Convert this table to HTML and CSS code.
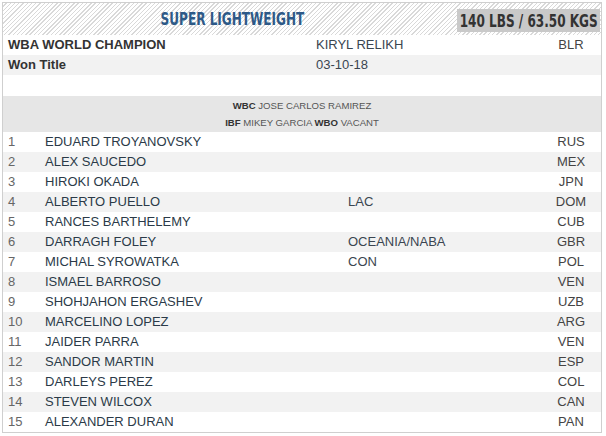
FILE: index.html
```html
<!DOCTYPE html>
<html>
<head>
<meta charset="utf-8">
<link rel="stylesheet" href="styles.css">
</head>
<body>
<div class="panel">
  <div class="head">
    <h2 class="title"><span class="narrow">SUPER LIGHTWEIGHT</span></h2>
    <span class="weight"><span class="narrow">140 LBS / 63.50 KGS</span></span>
  </div>
  <div class="crow">
    <span class="c-label">WBA WORLD CHAMPION</span>
    <span class="c-val">KIRYL RELIKH</span>
    <span class="c-cty">BLR</span>
  </div>
  <div class="crow alt">
    <span class="c-label">Won Title</span>
    <span class="c-val">03-10-18</span>
    <span class="c-cty"></span>
  </div>
  <div class="crow blank"></div>
  <div class="others">
    <div class="oline"><b>WBC</b> JOSE CARLOS RAMIREZ</div>
    <div class="oline"><b>IBF</b> MIKEY GARCIA <b>WBO</b> VACANT</div>
  </div>
  <div class="ranks">
    <div class="rrow"><span class="rk">1</span><span class="nm">EDUARD TROYANOVSKY</span><span class="rg"></span><span class="ct">RUS</span></div>
    <div class="rrow"><span class="rk">2</span><span class="nm">ALEX SAUCEDO</span><span class="rg"></span><span class="ct">MEX</span></div>
    <div class="rrow"><span class="rk">3</span><span class="nm">HIROKI OKADA</span><span class="rg"></span><span class="ct">JPN</span></div>
    <div class="rrow"><span class="rk">4</span><span class="nm">ALBERTO PUELLO</span><span class="rg">LAC</span><span class="ct">DOM</span></div>
    <div class="rrow"><span class="rk">5</span><span class="nm">RANCES BARTHELEMY</span><span class="rg"></span><span class="ct">CUB</span></div>
    <div class="rrow"><span class="rk">6</span><span class="nm">DARRAGH FOLEY</span><span class="rg">OCEANIA/NABA</span><span class="ct">GBR</span></div>
    <div class="rrow"><span class="rk">7</span><span class="nm">MICHAL SYROWATKA</span><span class="rg">CON</span><span class="ct">POL</span></div>
    <div class="rrow"><span class="rk">8</span><span class="nm">ISMAEL BARROSO</span><span class="rg"></span><span class="ct">VEN</span></div>
    <div class="rrow"><span class="rk">9</span><span class="nm">SHOHJAHON ERGASHEV</span><span class="rg"></span><span class="ct">UZB</span></div>
    <div class="rrow"><span class="rk">10</span><span class="nm">MARCELINO LOPEZ</span><span class="rg"></span><span class="ct">ARG</span></div>
    <div class="rrow"><span class="rk">11</span><span class="nm">JAIDER PARRA</span><span class="rg"></span><span class="ct">VEN</span></div>
    <div class="rrow"><span class="rk">12</span><span class="nm">SANDOR MARTIN</span><span class="rg"></span><span class="ct">ESP</span></div>
    <div class="rrow"><span class="rk">13</span><span class="nm">DARLEYS PEREZ</span><span class="rg"></span><span class="ct">COL</span></div>
    <div class="rrow"><span class="rk">14</span><span class="nm">STEVEN WILCOX</span><span class="rg"></span><span class="ct">CAN</span></div>
    <div class="rrow"><span class="rk">15</span><span class="nm">ALEXANDER DURAN</span><span class="rg"></span><span class="ct">PAN</span></div>
  </div>
</div>
</body>
</html>
```
FILE: styles.css
```css
html, body {
  margin: 0;
  padding: 0;
  background: #fff;
}
body {
  font-family: "Liberation Sans", Arial, sans-serif;
  font-size: 13px;
  color: #333;
}
.panel {
  margin: 2px 4px 0 2px;
  border: 1px solid #cfcfcf;
  width: 600px;
  box-sizing: border-box;
}
.head {
  display: flex;
  align-items: center;
  height: 32px;
  background: repeating-linear-gradient(135deg, #fff 0, #fff 2px, #d9d9d9 2px, #d9d9d9 3px);
}
.title {
  flex: 1;
  margin: 0;
  padding-left: 4px;
  text-align: center;
  font-family: "DejaVu Sans Condensed", "DejaVu Sans", sans-serif;
  font-weight: bold;
  font-size: 18px;
  line-height: 22px;
  color: #2d5987;
  white-space: nowrap;
}
.narrow {
  display: inline-block;
  transform: scaleX(0.745);
  transform-origin: center;
}
.weight {
  align-self: flex-end;
  margin: 0 1px 3px 0;
  background: #c9c9c9;
  width: 143px;
  height: 23px;
  line-height: 23px;
  text-align: center;
  white-space: nowrap;
  overflow: visible;
  font-family: "DejaVu Sans Condensed", "DejaVu Sans", sans-serif;
  font-weight: bold;
  font-size: 18px;
  color: #333;
  display: flex;
  justify-content: center;
}
.crow {
  display: flex;
  height: 20px;
  line-height: 20px;
  background: #fff;
}
.crow.alt { background: #f2f2f2; }
.crow.blank { height: 21px; }
.c-label {
  width: 308px;
  padding-left: 5px;
  font-weight: bold;
  color: #333;
}
.c-val {
  flex: 1;
  color: #3a4550;
}
.c-cty {
  width: 60px;
  text-align: center;
  color: #444;
}
.others {
  background: #e6e6e6;
  padding: 1px 0;
  text-align: center;
  font-size: 9.6px;
  color: #555;
}
.others b { color: #333; }
.oline {
  height: 17px;
  line-height: 17px;
}
.rrow {
  display: flex;
  height: 20px;
  line-height: 20px;
  background: #fff;
}
.rrow:nth-child(even) { background: #f2f2f2; }
.rk {
  width: 37px;
  padding-left: 5px;
  color: #666;
}
.nm {
  width: 303px;
  color: #2b3a48;
}
.rg {
  flex: 1;
  color: #3a4550;
}
.ct {
  width: 60px;
  text-align: center;
  color: #444;
}
```
